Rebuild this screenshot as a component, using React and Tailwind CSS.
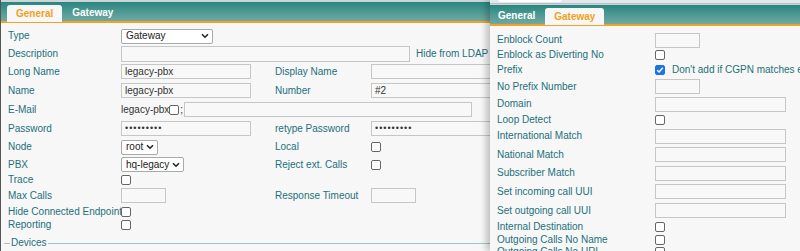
import React from 'react';

const LABEL = 'text-[#22707a]';

const Check = ({ checked }) => (
  <div
    className={`w-[10px] h-[10px] rounded-[2px] border flex items-center justify-center shrink-0 ${
      checked ? 'bg-[#1a73e8] border-[#1a73e8]' : 'bg-white border-[#666]'
    }`}
  >
    {checked && (
      <svg width="8" height="8" viewBox="0 0 8 8">
        <path d="M1.2 4.2 L3.1 6 L6.8 1.8" fill="none" stroke="white" strokeWidth="1.5" />
      </svg>
    )}
  </div>
);

const Input = ({ w, value, h = 'h-[15px]' }) => (
  <div className={`${w} ${h} border border-[#c6c6c6] bg-[#f8f8f8] flex items-center px-[3px] text-[#333] shrink-0 whitespace-nowrap`}>
    {value}
  </div>
);

const Select = ({ w = '', value }) => (
  <div className={`${w} h-[15px] border border-[#a9a9a9] rounded-[2px] bg-white flex items-center justify-between gap-[3px] pl-[4px] pr-[3px] text-[#222] whitespace-nowrap`}>
    <span>{value}</span>
    <svg width="8" height="6" viewBox="0 0 8 6">
      <path d="M1 1.2 L4 4.2 L7 1.2" fill="none" stroke="#222" strokeWidth="1.6" />
    </svg>
  </div>
);

const Dots = () => <span className="tracking-[1px] text-[9px]">•••••••••</span>;

const Row = ({ h, label, children, label2, children2 }) => (
  <div className={`flex items-center ${h}`}>
    <div className={`w-[113px] shrink-0 whitespace-nowrap ${LABEL}`}>{label}</div>
    <div className="w-[154px] shrink-0 flex items-center">{children}</div>
    {label2 !== undefined && (
      <>
        <div className={`w-[96px] shrink-0 whitespace-nowrap ${LABEL}`}>{label2}</div>
        <div className="flex items-center">{children2}</div>
      </>
    )}
  </div>
);

const RRow = ({ h, label, children }) => (
  <div className={`flex items-center ${h}`}>
    <div className={`w-[158px] shrink-0 whitespace-nowrap ${LABEL}`}>{label}</div>
    <div className="flex items-center whitespace-nowrap">{children}</div>
  </div>
);

const TabBar = ({ active }) => (
  <div className="h-[21px] bg-gradient-to-b from-[#238780] to-[#6fa9a4] border-b-2 border-[#f5a21e] flex items-end pl-[6px] gap-[8px]">
    {['General', 'Gateway'].map((t) =>
      t === active ? (
        <div key={t} className="h-[17px] px-[9px] bg-[#f7f7f7] rounded-t-[3px] text-[#f2a01a] font-bold flex items-center -mb-[1px]">
          {t}
        </div>
      ) : (
        <div key={t} className="h-[17px] px-[2px] text-white font-bold flex items-center">
          {t}
        </div>
      )
    )}
  </div>
);

export default function App() {
  return (
    <div className="relative w-[800px] h-[251px] overflow-hidden bg-[#f7f7f7] text-[10px] leading-none font-['Liberation_Sans',Arial,sans-serif]">
      {/* main window */}
      <div className="w-[490px] h-full border-l border-[#555]">
        <div className="h-[2px] bg-[#cfd4d6]" />
        <TabBar active="General" />
        <div className="pl-[7px] pt-[4px]">
          <Row h="h-[18px]" label="Type">
            <Select w="w-[92px]" value="Gateway" />
          </Row>
          <div className="flex items-center h-[17px]">
            <div className={`w-[113px] shrink-0 ${LABEL}`}>Description</div>
            <Input w="w-[289px]" h="h-[16px]" />
            <span className={`ml-[6px] whitespace-nowrap ${LABEL}`}>Hide from LDAP</span>
            <div className="ml-[3px]">
              <Check />
            </div>
          </div>
          <Row h="h-[19px]" label="Long Name" label2="Display Name" children2={<Input w="w-[130px]" />}>
            <Input w="w-[130px]" value="legacy-pbx" />
          </Row>
          <Row h="h-[19px]" label="Name" label2="Number" children2={<Input w="w-[130px]" value="#2" />}>
            <Input w="w-[130px]" value="legacy-pbx" />
          </Row>
          <div className="flex items-center h-[19px]">
            <div className={`w-[113px] shrink-0 ${LABEL}`}>E-Mail</div>
            <span className="text-[#333]">legacy-pbx</span>
            <Check />
            <span className="text-[#333] mx-[1px]">;</span>
            <Input w="w-[288px]" />
          </div>
          <Row h="h-[19px]" label="Password" label2="retype Password" children2={<Input w="w-[130px]" value={<Dots />} />}>
            <Input w="w-[130px]" value={<Dots />} />
          </Row>
          <Row h="h-[18px]" label="Node" label2="Local" children2={<Check />}>
            <Select value="root" />
          </Row>
          <Row h="h-[17px]" label="PBX" label2="Reject ext. Calls" children2={<Check />}>
            <Select value="hq-legacy" />
          </Row>
          <Row h="h-[14px]" label="Trace">
            <Check />
          </Row>
          <Row h="h-[17px]" label="Max Calls" label2="Response Timeout" children2={<Input w="w-[45px]" />}>
            <Input w="w-[45px]" />
          </Row>
          <Row h="h-[15px]" label="Hide Connected Endpoint">
            <Check />
          </Row>
          <Row h="h-[11px]" label="Reporting">
            <Check />
          </Row>
        </div>
        <div className="flex items-center mt-[8px] pl-[3px]">
          <div className="w-[6px] h-px bg-[#9fc6c6]" />
          <span className={`px-[1px] ${LABEL}`}>Devices</span>
          <div className="flex-1 h-px bg-[#9fc6c6]" />
        </div>
      </div>

      {/* gateway window */}
      <div className="absolute top-0 left-[490px] w-[310px] h-full bg-[#f7f7f7] shadow-[-4px_0_6px_rgba(0,0,0,0.22)]">
        <div className="h-[4px] bg-[#e2e8ec] border-b border-[#b9bfc2] relative">
          <div className="absolute left-[8px] top-[-4px] w-[64px] h-[6px] bg-white rounded-[4px]" />
        </div>
        <div className="h-[1px] bg-[#cfd4d6]" />
        <TabBar active="Gateway" />
        <div className="pl-[7px] pt-[6px]">
          <RRow h="h-[16px]" label="Enblock Count">
            <Input w="w-[45px]" />
          </RRow>
          <RRow h="h-[14px]" label="Enblock as Diverting No">
            <Check />
          </RRow>
          <RRow h="h-[16px]" label="Prefix">
            <Check checked />
            <span className={`ml-[7px] ${LABEL}`}>Don't add if CGPN matches e</span>
          </RRow>
          <RRow h="h-[17px]" label="No Prefix Number">
            <Input w="w-[45px]" />
          </RRow>
          <RRow h="h-[18px]" label="Domain">
            <Input w="w-[131px]" />
          </RRow>
          <RRow h="h-[14px]" label="Loop Detect">
            <Check />
          </RRow>
          <RRow h="h-[18px]" label="International Match">
            <Input w="w-[131px]" />
          </RRow>
          <RRow h="h-[19px]" label="National Match">
            <Input w="w-[131px]" />
          </RRow>
          <RRow h="h-[18px]" label="Subscriber Match">
            <Input w="w-[131px]" />
          </RRow>
          <RRow h="h-[19px]" label="Set incoming call UUI">
            <Input w="w-[131px]" />
          </RRow>
          <RRow h="h-[19px]" label="Set outgoing call UUI">
            <Input w="w-[131px]" />
          </RRow>
          <RRow h="h-[14px]" label="Internal Destination">
            <Check />
          </RRow>
          <RRow h="h-[12px]" label="Outgoing Calls No Name">
            <Check />
          </RRow>
          <RRow h="h-[12px]" label="Outgoing Calls No URI">
            <Check />
          </RRow>
        </div>
      </div>
    </div>
  );
}
